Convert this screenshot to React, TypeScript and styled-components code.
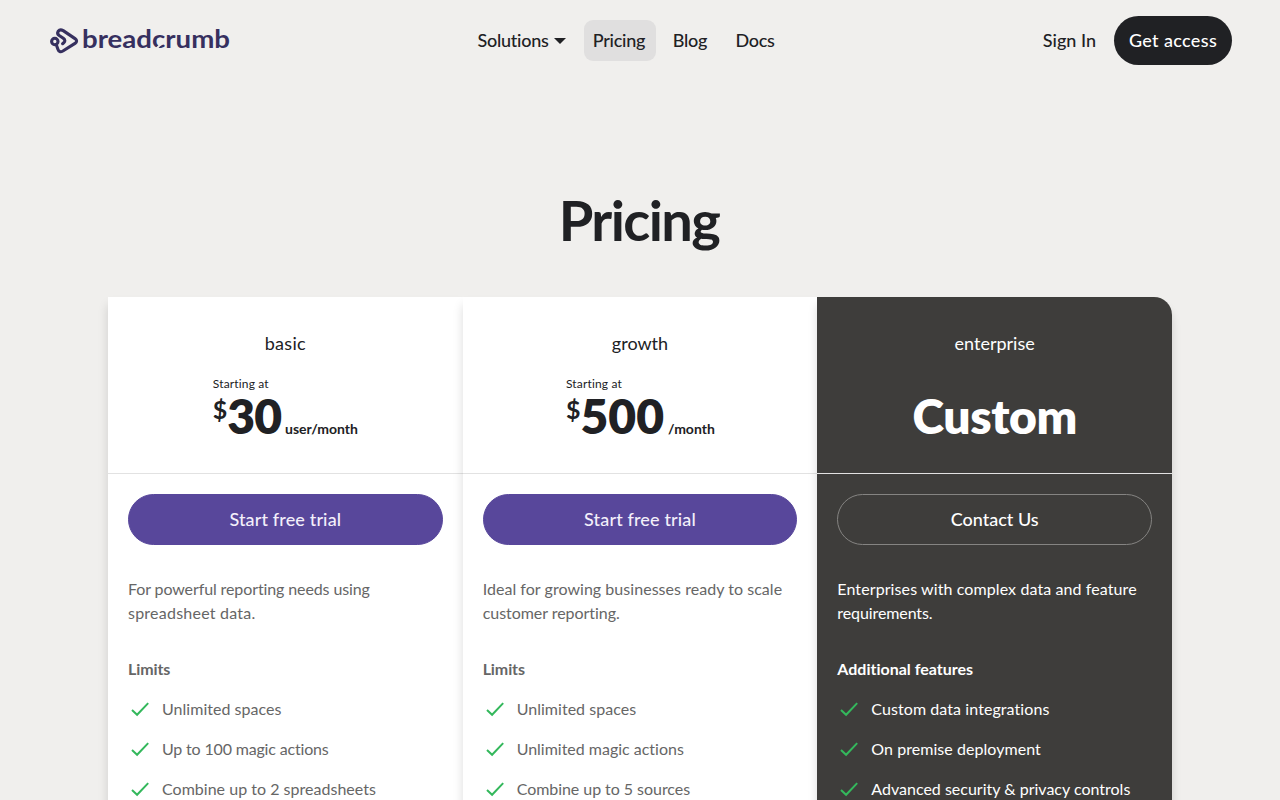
import styled, { createGlobalStyle, css } from 'styled-components';

const colors = {
  page: '#f0efed',
  ink: '#202124',
  muted: '#666666',
  brand: '#36305f',
  purple: '#58479b',
  dark: '#3e3d3b',
  green: '#34b85c',
};

type TextType = {
  label: string;
  spacing?: number;
};

type PlanType = {
  name: TextType;
  price: TextType;
  unit?: TextType;
  priceWidth?: number;
  action: TextType;
  description: TextType[];
  listTitle: TextType;
  features: TextType[];
  dark?: boolean;
};

const plans: PlanType[] = [
  {
    name: { label: 'basic', spacing: 0.3 },
    price: { label: '30', spacing: -1 },
    unit: { label: 'user/month' },
    priceWidth: 145,
    action: { label: 'Start free trial', spacing: 0.14 },
    description: [
      { label: 'For powerful reporting needs using', spacing: -0.11 },
      { label: 'spreadsheet data.', spacing: 0.23 },
    ],
    listTitle: { label: 'Limits', spacing: -0.1 },
    features: [
      { label: 'Unlimited spaces', spacing: 0.03 },
      { label: 'Up to 100 magic actions', spacing: -0.17 },
      { label: 'Combine up to 2 spreadsheets', spacing: 0.02 },
    ],
  },
  {
    name: { label: 'growth' },
    price: { label: '500' },
    unit: { label: '/month' },
    priceWidth: 148,
    action: { label: 'Start free trial', spacing: 0.14 },
    description: [
      { label: 'Ideal for growing businesses ready to scale', spacing: 0.04 },
      { label: 'customer reporting.', spacing: -0.04 },
    ],
    listTitle: { label: 'Limits', spacing: -0.1 },
    features: [
      { label: 'Unlimited spaces', spacing: 0.03 },
      { label: 'Unlimited magic actions', spacing: -0.01 },
      { label: 'Combine up to 5 sources', spacing: -0.05 },
    ],
  },
  {
    name: { label: 'enterprise' },
    price: { label: 'Custom', spacing: -0.4 },
    action: { label: 'Contact Us' },
    description: [
      { label: 'Enterprises with complex data and feature', spacing: 0.1 },
      { label: 'requirements.', spacing: -0.1 },
    ],
    listTitle: { label: 'Additional features' },
    features: [
      { label: 'Custom data integrations', spacing: 0.08 },
      { label: 'On premise deployment', spacing: 0.05 },
      { label: 'Advanced security & privacy controls' },
    ],
    dark: true,
  },
];

const Logo = () => (
  <LogoSvg viewBox="0 0 182 32" aria-label="breadcrumb">
    <g fill="none" stroke={colors.brand} strokeWidth="3.1" strokeLinecap="round" strokeLinejoin="round">
      <circle cx="6.8" cy="16.5" r="3.2" />
      <path d="M8.4 20 L9.9 24.2 Q11.2 28 14.9 26 L27 18.4 Q30.2 16 27 13.6 L15.2 5.6 Q12.1 3.8 10.2 6.2 Q8.7 8.7 11.2 10.5 L15.3 13.3 Q18.2 15.5 15.7 17.8 L14.6 18.7" />
    </g>
    <LogoText x="34" y="22.9" textLength="148" lengthAdjust="spacingAndGlyphs">
      breadcrumb
    </LogoText>
    <path d="M107 25 L113.4 18.6" stroke={colors.page} strokeWidth="2" />
  </LogoSvg>
);

const Check = () => (
  <CheckSvg viewBox="0 0 24 24">
    <path d="M4 13 L9.1 17.8 L20.2 6.1" fill="none" stroke={colors.green} strokeWidth="2" />
  </CheckSvg>
);

const Plan = ({ plan }: { plan: PlanType }) => (
  <Card $dark={plan.dark}>
    <CardHead>
      <PlanName $dark={plan.dark} $spacing={plan.name.spacing}>{plan.name.label}</PlanName>
      {plan.unit ? (
        <PriceBlock $width={plan.priceWidth}>
          <StartingAt>Starting at</StartingAt>
          <PriceRow>
            <Currency>$</Currency>
            <Price $spacing={plan.price.spacing}>{plan.price.label}</Price>
            <Unit>{plan.unit.label}</Unit>
          </PriceRow>
        </PriceBlock>
      ) : (
        <CustomPrice $spacing={plan.price.spacing}>{plan.price.label}</CustomPrice>
      )}
    </CardHead>
    <CardBody>
      <PlanButton $dark={plan.dark} $spacing={plan.action.spacing}>{plan.action.label}</PlanButton>
      <Description>
        {plan.description.map((line) => (
          <Line key={line.label} $spacing={line.spacing}>{line.label}</Line>
        ))}
      </Description>
      <ListTitle $spacing={plan.listTitle.spacing}>{plan.listTitle.label}</ListTitle>
      <FeatureList>
        {plan.features.map((feature) => (
          <Feature key={feature.label} $spacing={feature.spacing}>
            <Check />
            {feature.label}
          </Feature>
        ))}
      </FeatureList>
    </CardBody>
  </Card>
);

const App = () => {
  return (
    <>
      <GlobalStyle />
      <Page>
        <Header>
          <Logo />
          <Nav>
            <NavLink $width={108}>
              Solutions
              <Caret />
            </NavLink>
            <NavLink $width={72} $active>Pricing</NavLink>
            <NavLink $width={54}>Blog</NavLink>
            <NavLink $width={60}>Docs</NavLink>
          </Nav>
          <Actions>
            <SignIn>Sign In</SignIn>
            <AccessButton>Get access</AccessButton>
          </Actions>
        </Header>
        <Title>Pricing</Title>
        <Plans>
          {plans.map((plan) => (
            <Plan key={plan.name.label} plan={plan} />
          ))}
        </Plans>
      </Page>
    </>
  );
};

export default App;

const GlobalStyle = createGlobalStyle`
  *,
  *::before,
  *::after {
    box-sizing: border-box;
  }

  body {
    margin: 0;
    background-color: ${colors.page};
    color: ${colors.ink};
    font-family: Lato, 'Liberation Sans', sans-serif;
    font-variant-ligatures: none;
    -webkit-font-smoothing: antialiased;
  }

  h1, h2, h3, p, ul {
    margin: 0;
    padding: 0;
  }

  button {
    font-family: inherit;
    cursor: pointer;
  }
`;

const spaced = css<{ $spacing?: number }>`
  letter-spacing: ${(props) => props.$spacing ?? 0}px;
  white-space: nowrap;
`;

const Page = styled.main`
  height: 800px;
  overflow: hidden;
`;

const Header = styled.header`
  height: 81px;
  padding: 0 48px;
  display: flex;
  align-items: center;
`;

const LogoSvg = styled.svg`
  width: 182px;
  height: 32px;
  display: block;
`;

const LogoText = styled.text`
  font-size: 24px;
  font-weight: 700;
  fill: ${colors.brand};
`;

const Nav = styled.nav`
  display: flex;
  gap: 8px;
  margin-left: 238px;
`;

const NavLink = styled.a<{ $width: number; $active?: boolean }>`
  width: ${(props) => props.$width}px;
  height: 41px;
  padding: 0 2px 2px 0;
  display: flex;
  align-items: center;
  justify-content: center;
  gap: 5px;
  border-radius: 9px;
  background-color: ${(props) => (props.$active ? '#e0dfdf' : 'transparent')};
  font-size: 18px;
  font-weight: 500;
  letter-spacing: -0.25px;
`;

const Caret = styled.span`
  margin: 3px -1px 0 0;
  border: 6px solid transparent;
  border-top: 6px solid ${colors.ink};
  border-bottom: 0;
`;

const Actions = styled.div`
  display: flex;
  align-items: center;
  gap: 18px;
  margin-left: auto;
`;

const SignIn = styled.a`
  padding-bottom: 2px;
  font-size: 18px;
  font-weight: 500;
`;

const AccessButton = styled.button`
  width: 118px;
  height: 49px;
  padding: 0 0 2px;
  border: none;
  border-radius: 25px;
  background-color: ${colors.ink};
  color: #fff;
  font-size: 18px;
  font-weight: 500;
  letter-spacing: 0.35px;
  white-space: nowrap;
`;

const Title = styled.h1`
  margin-top: 105px;
  padding-right: 2px;
  font-size: 56px;
  font-weight: 700;
  line-height: 68px;
  text-align: center;
  letter-spacing: -1.6px;
`;

const Plans = styled.section`
  width: 1064px;
  margin: 43px auto 0;
  display: grid;
  grid-template-columns: repeat(3, 1fr);
`;

const Card = styled.article<{ $dark?: boolean }>`
  height: 640px;
  background-color: ${(props) => (props.$dark ? colors.dark : '#fff')};
  color: ${(props) => (props.$dark ? '#fff' : colors.muted)};
  border-radius: ${(props) => (props.$dark ? '0 18px 0 0' : '0')};
  box-shadow: 0 8px 10px rgba(0, 0, 0, 0.14);
`;

const CardHead = styled.div`
  height: 177px;
  padding-top: 33px;
  display: flex;
  flex-direction: column;
  align-items: center;
  border-bottom: 1px solid #e2e2e2;
`;

const PlanName = styled.h2<{ $dark?: boolean; $spacing?: number }>`
  color: ${(props) => (props.$dark ? '#fff' : colors.ink)};
  font-size: 18px;
  font-weight: 400;
  line-height: 26px;
  ${spaced}
`;

const PriceBlock = styled.div<{ $width?: number }>`
  width: ${(props) => props.$width}px;
  margin-top: 20px;
  color: ${colors.ink};
`;

const StartingAt = styled.p`
  font-size: 12px;
  line-height: 16px;
  letter-spacing: 0.15px;
`;

const PriceRow = styled.div`
  height: 48px;
  display: flex;
  align-items: flex-start;
  white-space: nowrap;
`;

const Currency = styled.span`
  font-size: 25px;
  font-weight: 700;
  line-height: 34px;
`;

const Price = styled.span<{ $spacing?: number }>`
  font-size: 48px;
  font-weight: 800;
  line-height: 48px;
  ${spaced}
`;

const Unit = styled.span`
  margin-left: 4px;
  font-size: 14px;
  font-weight: 700;
  line-height: 74px;
`;

const CustomPrice = styled.p<{ $spacing?: number }>`
  margin-top: 36px;
  font-size: 48px;
  font-weight: 800;
  line-height: 48px;
  ${spaced}
`;

const CardBody = styled.div`
  padding: 20px;
`;

const PlanButton = styled.button<{ $dark?: boolean; $spacing?: number }>`
  width: 100%;
  height: 51px;
  padding: 0 0 2px;
  display: block;
  border: 1px solid ${(props) => (props.$dark ? '#858482' : colors.purple)};
  border-radius: 26px;
  background-color: ${(props) => (props.$dark ? 'transparent' : colors.purple)};
  color: ${(props) => (props.$dark ? '#fff' : '#f3effa')};
  font-size: 18px;
  font-weight: 500;
  ${spaced}
`;

const Description = styled.p`
  margin-top: 32px;
`;

const Line = styled.span<{ $spacing?: number }>`
  display: block;
  width: fit-content;
  font-size: 16px;
  line-height: 24px;
  ${spaced}
`;

const ListTitle = styled.h3<{ $spacing?: number }>`
  width: fit-content;
  margin-top: 32px;
  font-size: 16px;
  font-weight: 700;
  line-height: 24px;
  ${spaced}
`;

const FeatureList = styled.ul`
  margin-top: 8px;
  list-style: none;
`;

const Feature = styled.li<{ $spacing?: number }>`
  height: 40px;
  padding-bottom: 1px;
  display: flex;
  align-items: center;
  gap: 10px;
  font-size: 16px;
  ${spaced}
`;

const CheckSvg = styled.svg`
  width: 24px;
  height: 24px;
  flex-shrink: 0;
`;
